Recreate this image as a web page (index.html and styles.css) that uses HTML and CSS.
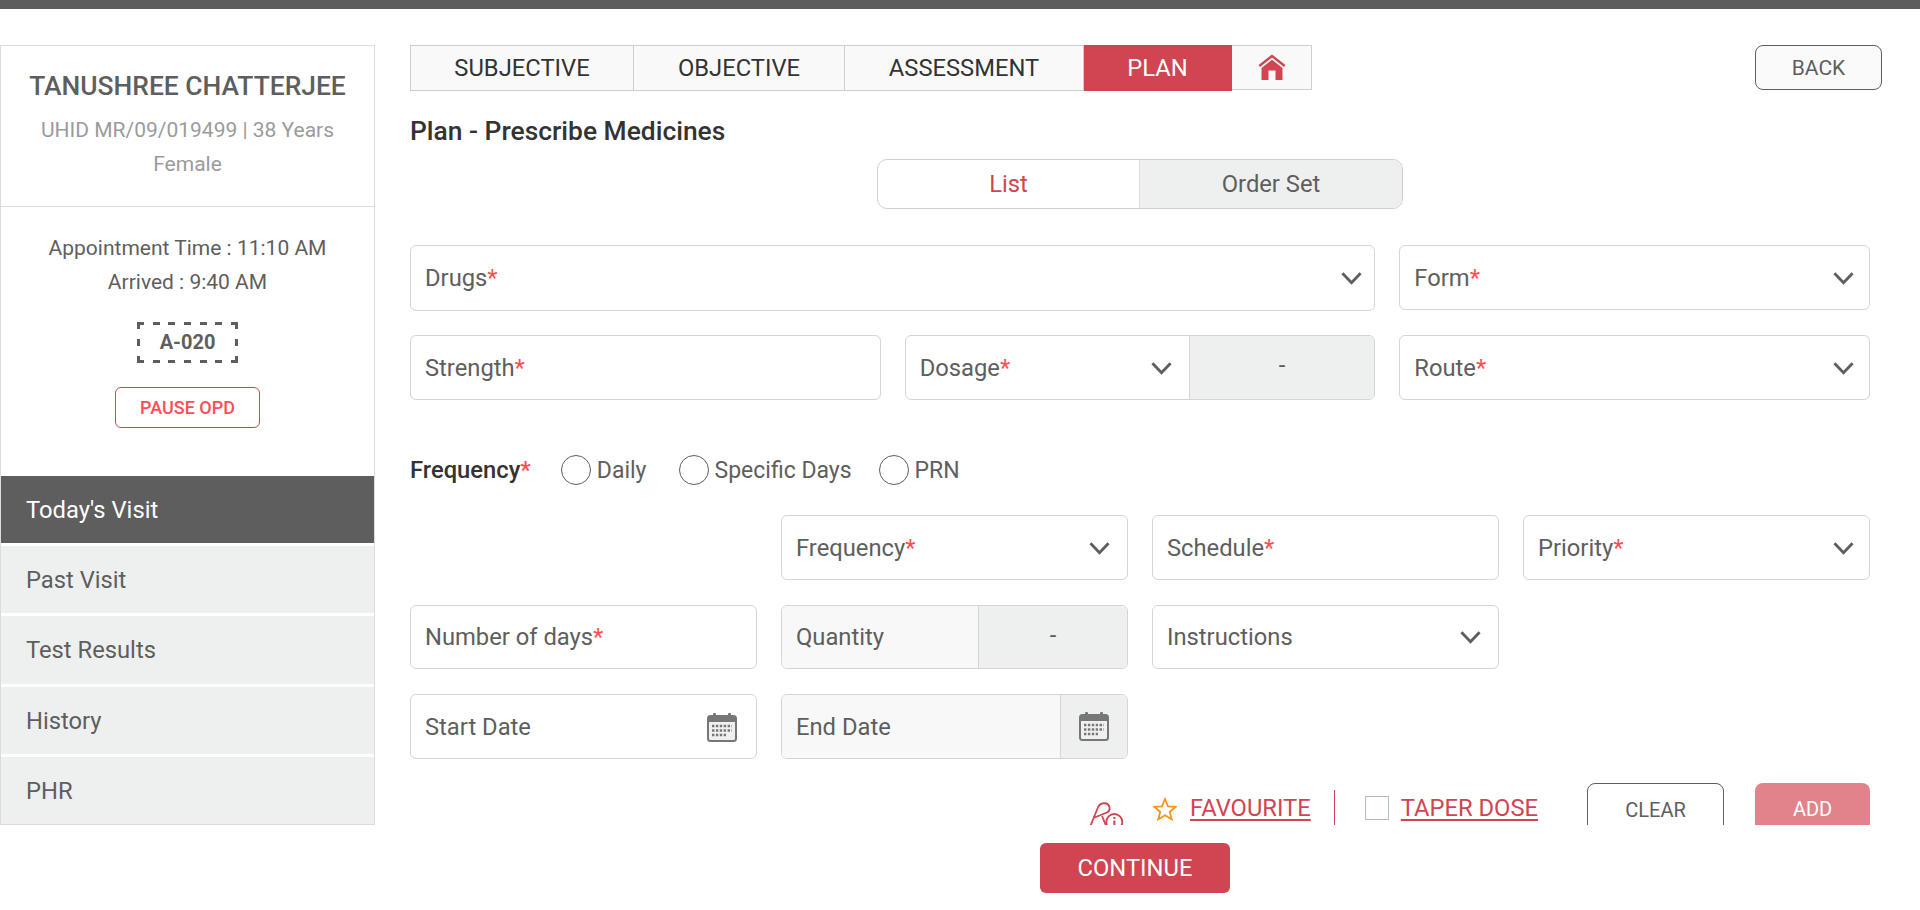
FILE: index.html
```html
<!DOCTYPE html>
<html>
	<head>
		<meta charset="utf-8">
		<title>Plan - Prescribe Medicines</title>
		<link rel="stylesheet" href="styles.css">
	</head>
	<body>
		<div class="topbar"></div>
		<div class="page">
			<div class="sidebar">
				<div class="patient">
					<div class="patient-name">TANUSHREE CHATTERJEE</div>
					<div class="patient-meta">UHID MR/09/019499 | 38 Years<br>Female</div>
				</div>
				<div class="visit">
					<div class="visit-time">Appointment Time : 11:10 AM<br>Arrived : 9:40 AM</div>
					<div class="token">A-020</div>
					<div class="pause">PAUSE OPD</div>
				</div>
				<ul class="side-nav">
					<li class="active">Today's Visit</li>
					<li>Past Visit</li>
					<li>Test Results</li>
					<li>History</li>
					<li>PHR</li>
				</ul>
			</div>
			<div class="main">
				<div class="head-row">
					<div class="tabs">
						<div class="tab tab-s">SUBJECTIVE</div>
						<div class="tab tab-o">OBJECTIVE</div>
						<div class="tab tab-a">ASSESSMENT</div>
						<div class="tab tab-p">PLAN</div>
						<div class="tab tab-h">
							<svg width="28" height="26" viewBox="0 0 28 26">
								<path d="M0.5 11 14 0.5 27.5 11 26 13 14 3.6 2 13z" fill="#d14451"/>
								<path d="M3.5 14 14 5.8 24.5 14V26H17.5V16.5H10.5V26H3.5z" fill="#d14451"/>
							</svg>
						</div>
					</div>
					<div class="back">BACK</div>
				</div>
				<div class="title">Plan - Prescribe Medicines</div>
				<div class="toggle">
					<div class="toggle-on">List</div>
					<div class="toggle-off">Order Set</div>
				</div>
				<div class="form">
					<div class="grid3">
						<div class="field span2"><span>Drugs<i>*</i></span><svg class="chev" viewBox="0 0 22 14"><path d="M1.5 2 11 12 20.500 2" /></svg></div>
						<div class="field"><span>Form<i>*</i></span><svg class="chev" viewBox="0 0 22 14"><path d="M1.500 2 11 12 20.500 2" /></svg></div>
						<div class="field"><span>Strength<i>*</i></span></div>
						<div class="field split">
							<div class="split-left dosage"><span>Dosage<i>*</i></span><svg class="chev" viewBox="0 0 22 14"><path d="M1.500 2 11 12 20.500 2" /></svg></div>
							<div class="split-right">-</div>
						</div>
						<div class="field"><span>Route<i>*</i></span><svg class="chev" viewBox="0 0 22 14"><path d="M1.500 2 11 12 20.500 2" /></svg></div>
					</div>
					<div class="freq-row">
						<b>Frequency<i>*</i></b>
						<label class="radio r1"><em></em>Daily</label>
						<label class="radio r2"><em></em>Specific Days</label>
						<label class="radio"><em></em>PRN</label>
					</div>
					<div class="grid4">
						<div class="blank"></div>
						<div class="field narrow"><span>Frequency<i>*</i></span><svg class="chev" viewBox="0 0 22 14"><path d="M1.500 2 11 12 20.500 2" /></svg></div>
						<div class="field"><span>Schedule<i>*</i></span></div>
						<div class="field"><span>Priority<i>*</i></span><svg class="chev" viewBox="0 0 22 14"><path d="M1.500 2 11 12 20.500 2" /></svg></div>

						<div class="field"><span>Number of days<i>*</i></span></div>
						<div class="field split off">
							<div class="split-left qty">Quantity</div>
							<div class="split-right">-</div>
						</div>
						<div class="field narrow"><span>Instructions</span><svg class="chev" viewBox="0 0 22 14"><path d="M1.500 2 11 12 20.500 2" /></svg></div>
						<div class="blank"></div>

						<div class="field"><span>Start Date</span>
							<svg class="cal" viewBox="0 0 30 30"><use href="#cal-icon"/></svg>
						</div>
						<div class="field split off">
							<div class="split-left end-date">End Date</div>
							<div class="split-right cal-box"><svg class="cal" viewBox="0 0 30 30"><use href="#cal-icon"/></svg></div>
						</div>
					</div>
					<div class="actions">
						<svg class="rx" width="44" height="30" viewBox="0 0 44 30">
							<g fill="none" stroke="#d14451" stroke-width="1.800">
								<path d="M5 29 12.700 10C14.500 4 23.500 3.500 24.500 9.500 25 12 24 13.500 22 14.500L8.300 20"/>
								<path d="M17 18 22 30"/>
								<circle cx="29.300" cy="24" r="8"/>
							</g>
							<rect x="28.400" y="19" width="2" height="2" fill="#d14451"/>
							<rect x="28.400" y="22.500" width="2" height="6" fill="#d14451"/>
						</svg>
						<svg class="star" width="24" height="24" viewBox="0 0 24 24"><path d="M12 2 15 9.300 22.800 9.800 16.800 14.800 18.700 22.300 12 18.200 5.300 22.300 7.200 14.800 1.200 9.800 9 9.300z" fill="none" stroke="#f7941d" stroke-width="1.800"/></svg>
						<a class="link fav">FAVOURITE</a>
						<div class="vline"></div>
						<div class="check"></div>
						<a class="link taper">TAPER DOSE</a>
						<div class="btn-clear">CLEAR</div>
						<div class="btn-add">ADD</div>
					</div>
				</div>
				<div class="footer"><div class="continue">CONTINUE</div></div>
			</div>
		</div>
		<svg width="0" height="0" class="defs">
			<symbol id="cal-icon" viewBox="0 0 30 30">
				<rect x="1" y="4" width="28" height="25" rx="2.500" fill="#f0f0f0" stroke="#777" stroke-width="2"/>
				<rect x="1" y="4" width="28" height="6" fill="#777"/>
				<rect x="6" y="1" width="3" height="7" rx="1" fill="#777"/>
				<rect x="21" y="1" width="3" height="7" rx="1" fill="#777"/>
				<path d="M5 14h20M5 18.500h20M5 23h14" stroke="#777" stroke-width="2.400" stroke-dasharray="2.400 1.500"/>
			</symbol>
		</svg>
	</body>
</html>
```

FILE: styles.css
```css
*{
	margin: 0;
	padding: 0;
	box-sizing: border-box;
}

body{
	background: #fff;
	font-family: Roboto, "Liberation Sans", sans-serif;
	color: #5e5e5e;
	overflow: hidden;
}

i{
	font-style: normal;
	color: #ff4d55;
}

.defs{
	position: absolute;
}

.topbar{
	height: 9px;
	background: #5e5e5e;
}

.page{
	display: flex;
	padding-top: 36px;
}

/* left column */
.sidebar{
	width: 375px;
	height: 780px;
	border: 1px solid #dcdcdc;
	flex-shrink: 0;
	display: flex;
	flex-direction: column;
}

.patient{
	height: 161px;
	padding-top: 25px;
	border-bottom: 1px solid #dcdcdc;
	text-align: center;
}
.patient-name{
	font-size: 26.4px;
	font-weight: 500;
	line-height: 30px;
}
.patient-meta{
	margin-top: 12px;
	font-size: 21px;
	line-height: 34px;
	color: #9b9b9b;
}

.visit{
	height: 269px;
	padding-top: 24px;
	text-align: center;
	font-size: 21px;
}
.visit-time{
	line-height: 34px;
}
.token{
	width: 101px;
	height: 41px;
	margin: 23px auto 0;
	background-image:
		repeating-linear-gradient(90deg, #5e5e5e 0 7px, transparent 7px 15.670px),
		repeating-linear-gradient(90deg, #5e5e5e 0 7px, transparent 7px 15.670px),
		repeating-linear-gradient(180deg, #5e5e5e 0 7px, transparent 7px 17px),
		repeating-linear-gradient(180deg, #5e5e5e 0 7px, transparent 7px 17px);
	background-size: 100% 3px, 100% 3px, 3px 100%, 3px 100%;
	background-position: 0 0, 0 100%, 0 0, 100% 0;
	background-repeat: no-repeat;
	font-size: 20px;
	font-weight: 700;
	line-height: 41px;
}
.pause{
	width: 145px;
	height: 41px;
	margin: 24px auto 0;
	border: 1px solid #d14451;
	border-radius: 6px;
	color: #ff4d55;
	font-size: 18px;
	font-weight: 500;
	line-height: 39px;
}

.side-nav{
	list-style: none;
	flex: 1;
	display: flex;
	flex-direction: column;
	gap: 3px;
}
.side-nav li{
	flex: 1;
	padding: 2px 0 0 25px;
	background: #eef0ef;
	font-size: 23.760px;
	line-height: 64px;
}
.side-nav li.active{
	background: #5e5e5e;
	color: #fff;
}

/* right column */
.main{
	width: 1472px;
	margin-left: 35px;
}

.head-row{
	display: flex;
	justify-content: space-between;
}

.tabs{
	display: flex;
	height: 46px;
}
.tab{
	background: #f9f9f9;
	border: 1px solid #cfcfcf;
	border-left: none;
	color: #333;
	font-size: 23.760px;
	line-height: 45px;
	text-align: center;
}
.tab-s{
	width: 224px;
	border-left: 1px solid #cfcfcf;
}
.tab-o{
	width: 211px;
}
.tab-a{
	width: 239px;
}
.tab-p{
	width: 148px;
	background: #d14451;
	border-color: #d14451;
	color: #fff;
}
.tab-h{
	width: 80px;
	height: 45px;
	padding-top: 8px;
	line-height: 0;
}

.back{
	width: 127px;
	height: 45px;
	border: 1px solid #5e5e5e;
	border-radius: 8px;
	background: #fafafa;
	font-size: 21px;
	line-height: 44px;
	text-align: center;
}

.title{
	margin-top: 25px;
	color: #333;
	font-size: 26.400px;
	font-weight: 500;
	line-height: 30px;
}

.toggle{
	display: flex;
	width: 526px;
	height: 50px;
	margin: 13px 0 0 467px;
	border: 1px solid #cfcfcf;
	border-radius: 10px;
	overflow: hidden;
	font-size: 23.760px;
	line-height: 48px;
	text-align: center;
}
.toggle-on{
	width: 261px;
	color: #d14451;
}
.toggle-off{
	flex: 1;
	background: #eef0ef;
	border-left: 1px solid #dcdcdc;
}

/* form area is cut off by its scroll box */
.form{
	width: 1460px;
	height: 616px;
	padding-top: 36px;
	overflow: hidden;
}

.grid3{
	display: grid;
	grid-template-columns: repeat(3, 1fr);
	gap: 24px;
	align-items: start;
}
.grid4{
	display: grid;
	grid-template-columns: repeat(4, 1fr);
	gap: 25px 24px;
	margin-top: 30px;
}

.field{
	height: 64.500px;
	padding: 1px 15px 0 14px;
	border: 1px solid #d4d4da;
	border-radius: 6px;
	display: flex;
	align-items: center;
	justify-content: space-between;
	font-size: 23.760px;
}
.span2{
	grid-column: span 2;
	height: 66px;
	padding: 0 12px 0 14px;
}
.narrow{
	padding-right: 17px;
}

.chev{
	width: 21px;
	height: 14px;
	fill: none;
	stroke: #5e5e5e;
	stroke-width: 3;
}

.split{
	padding: 0;
	overflow: hidden;
	align-items: stretch;
}
.split-left{
	display: flex;
	align-items: center;
	justify-content: space-between;
	padding: 1px 17px 0 14px;
}
.split-right{
	flex: 1;
	background: #eef0ef;
	border-left: 1px solid #d4d4da;
	display: flex;
	align-items: center;
	justify-content: center;
	padding-bottom: 4px;
}
.dosage{
	width: 283px;
}
.off .split-left{
	background: #f8f8f8;
}
.qty{
	width: 196px;
}
.end-date{
	width: 278px;
}
.cal-box{
	padding-bottom: 0;
}
.cal{
	width: 30px;
	height: 30px;
	margin: 0 4px 0 0;
}
.cal-box .cal{
	margin: 0;
}

.freq-row{
	display: flex;
	align-items: center;
	height: 30px;
	margin-top: 55.500px;
	font-size: 23px;
}
.freq-row b{
	font-size: 23.760px;
	font-weight: 500;
	color: #333;
	margin-right: 30px;
}
.radio{
	display: flex;
	align-items: center;
}
.radio em{
	width: 30px;
	height: 30px;
	margin-right: 6px;
	border: 1px solid #5e5e5e;
	border-radius: 50%;
}
.r1{
	margin-right: 32px;
}
.r2{
	margin-right: 27px;
}

.actions{
	display: flex;
	align-items: flex-start;
	height: 70px;
	margin-top: 24.500px;
	font-size: 23.760px;
}
.rx{
	margin: 15px 24px 0 675px;
	flex-shrink: 0;
}
.star{
	margin-top: 14px;
	flex-shrink: 0;
}
.link{
	margin-top: 10px;
	margin-left: 13px;
	color: #d14451;
	line-height: 30px;
	text-decoration: underline;
	text-underline-offset: 3px;
}
.taper{
	margin-left: 12px;
}
.vline{
	width: 1px;
	height: 40px;
	margin: 7px 30px 0 23px;
	background: #d14451;
}
.check{
	width: 24px;
	height: 24px;
	margin-top: 13px;
	border: 1px solid #b0bcc6;
}
.btn-clear,.btn-add{
	height: 60px;
	font-size: 20px;
	line-height: 52px;
	text-align: center;
	border-radius: 8px;
}
.btn-clear{
	width: 137px;
	margin-left: 49px;
	border: 1px solid #5e5e5e;
}
.btn-add{
	width: 115px;
	margin-left: 31px;
	background: #e2838c;
	color: #fff;
}

.footer{
	display: flex;
	justify-content: center;
	width: 1460px;
	padding-top: 18px;
}
.continue{
	width: 190px;
	height: 50px;
	margin-right: 10px;
	background: #d14451;
	border-radius: 6px;
	color: #fff;
	font-size: 23.760px;
	line-height: 50px;
	text-align: center;
}
```
